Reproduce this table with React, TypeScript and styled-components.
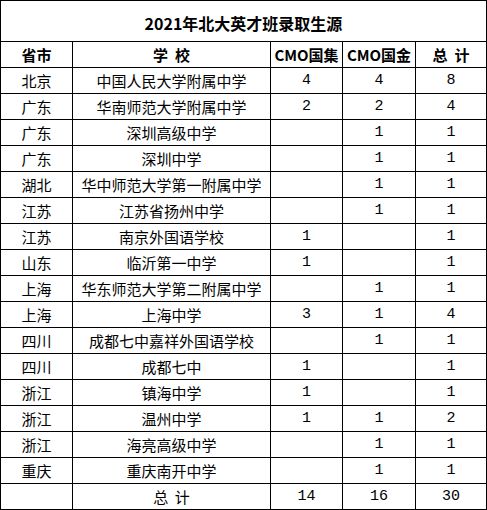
import React from "react";
import styled, { createGlobalStyle } from "styled-components";

const Global = createGlobalStyle`
  html, body { margin: 0; padding: 0; background: #fff; }
  body { font-family: "Noto Sans CJK SC", "Noto Sans", sans-serif; color: #000; }
`;

const Grid = styled.div`
  display: grid;
  grid-template-columns: 72px 198px 72px 73px 71px;
  width: 487px;
  box-sizing: border-box;
  border-left: 1px solid #000;
  border-top: 1px solid #000;
`;

const Cell = styled.div<{ $span?: number; $bold?: boolean; $num?: boolean; $tall?: boolean }>`
  grid-column: span ${(p) => p.$span ?? 1};
  box-sizing: border-box;
  height: ${(p) => (p.$tall ? 41 : 26)}px;
  border-right: 1px solid #000;
  border-bottom: 1px solid #000;
  display: flex;
  align-items: center;
  justify-content: center;
  font-size: ${(p) => (p.$tall ? 16 : 15)}px;
  font-weight: ${(p) => (p.$bold ? 700 : 400)};
  font-family: ${(p) =>
    p.$num
      ? `"Liberation Mono", "Noto Sans CJK SC", monospace`
      : `"Noto Sans CJK SC", "Noto Sans", sans-serif`};
  white-space: pre;
  line-height: 1;
  padding-top: ${(p) => (p.$tall ? 3 : 0)}px;
`;

type Row = [string, string, string, string, string];

const rows: Row[] = [
  ["北京", "中国人民大学附属中学", "4", "4", "8"],
  ["广东", "华南师范大学附属中学", "2", "2", "4"],
  ["广东", "深圳高级中学", "", "1", "1"],
  ["广东", "深圳中学", "", "1", "1"],
  ["湖北", "华中师范大学第一附属中学", "", "1", "1"],
  ["江苏", "江苏省扬州中学", "", "1", "1"],
  ["江苏", "南京外国语学校", "1", "", "1"],
  ["山东", "临沂第一中学", "1", "", "1"],
  ["上海", "华东师范大学第二附属中学", "", "1", "1"],
  ["上海", "上海中学", "3", "1", "4"],
  ["四川", "成都七中嘉祥外国语学校", "", "1", "1"],
  ["四川", "成都七中", "1", "", "1"],
  ["浙江", "镇海中学", "1", "", "1"],
  ["浙江", "温州中学", "1", "1", "2"],
  ["浙江", "海亮高级中学", "", "1", "1"],
  ["重庆", "重庆南开中学", "", "1", "1"],
];

export default function App() {
  return (
    <>
      <Global />
      <Grid>
        <Cell $span={5} $bold $tall>
          2021年北大英才班录取生源
        </Cell>
        <Cell $bold>省市</Cell>
        <Cell $bold>学  校</Cell>
        <Cell $bold>CMO国集</Cell>
        <Cell $bold>CMO国金</Cell>
        <Cell $bold>总  计</Cell>
        {rows.map((r, i) => (
          <React.Fragment key={i}>
            <Cell>{r[0]}</Cell>
            <Cell>{r[1]}</Cell>
            <Cell $num>{r[2]}</Cell>
            <Cell $num>{r[3]}</Cell>
            <Cell $num>{r[4]}</Cell>
          </React.Fragment>
        ))}
        <Cell />
        <Cell>总  计</Cell>
        <Cell $num>14</Cell>
        <Cell $num>16</Cell>
        <Cell $num>30</Cell>
      </Grid>
    </>
  );
}
